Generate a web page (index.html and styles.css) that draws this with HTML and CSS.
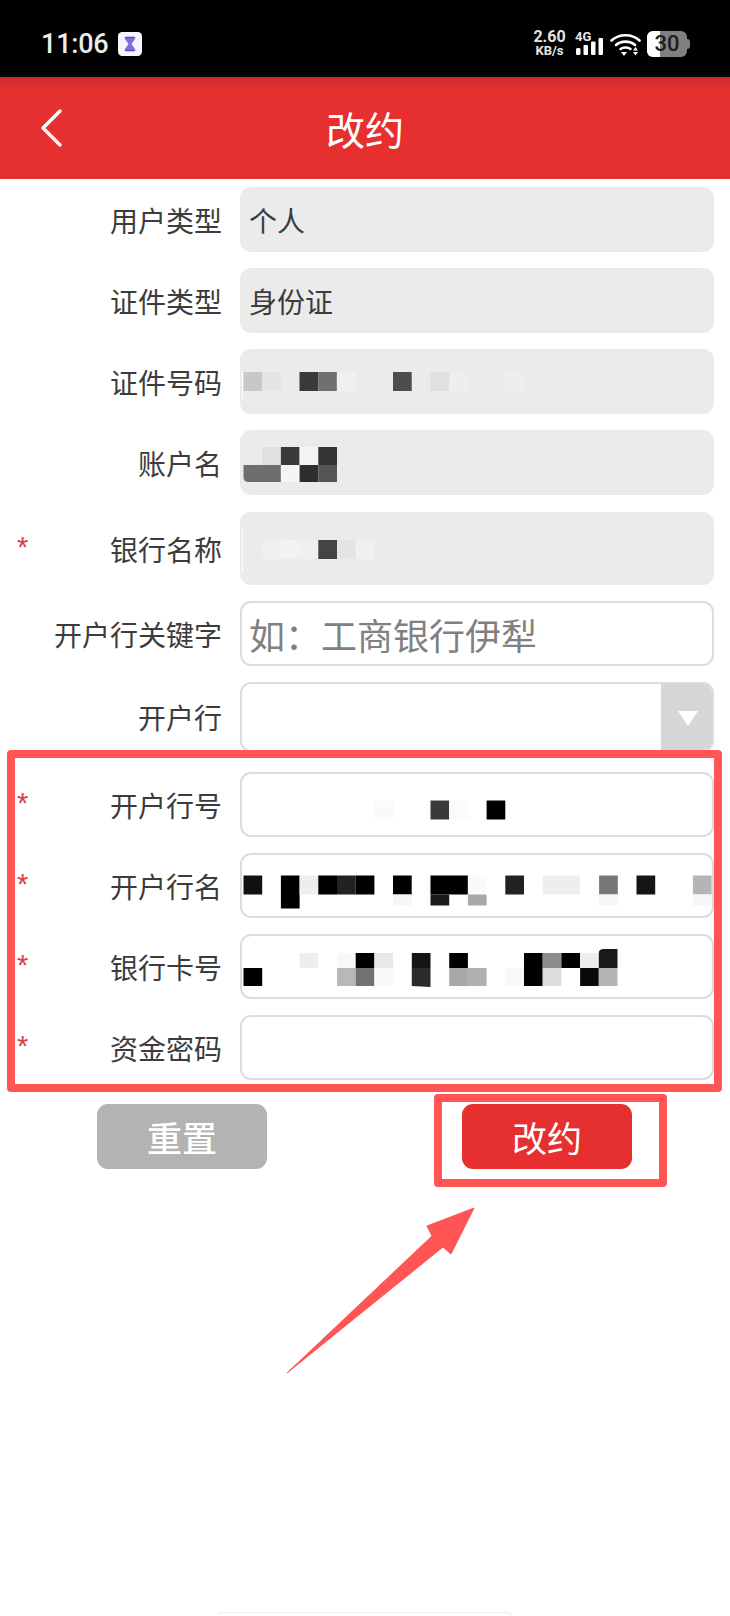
FILE: index.html
```html
<!DOCTYPE html>
<html lang="zh-CN">
<head>
<meta charset="utf-8">
<title>改约</title>
<link rel="stylesheet" href="styles.css">
</head>
<body>
<div class="page">
  <div class="statusbar">
    <span class="time">11:06</span>
    <svg class="app-icon" viewBox="0 0 23 23">
      <rect width="23" height="23" rx="4" fill="#f6f4fd"/>
      <path d="M6.5 4.5h10v2l-3.6 5 3.6 5v2h-10v-2l3.6-5-3.6-5z" fill="#7b6fe0"/>
      <path d="M7.5 5.2h8" stroke="#4f45b5" stroke-width="1"/>
      <path d="M7.5 17.8h8" stroke="#4f45b5" stroke-width="1"/>
    </svg>
    <span class="status-right">
      <span class="speed"><span class="speed-num">2.60</span><span class="speed-unit">KB/s</span></span>
      <span class="signal">
        <span class="net">4G</span>
        <svg class="bars" viewBox="0 0 27 17">
          <rect x="0" y="10" width="4.5" height="7" rx="1.5" fill="#fff"/>
          <rect x="7.5" y="7" width="4.5" height="10" rx="1" fill="#fff"/>
          <rect x="15" y="3.5" width="4.5" height="13.5" rx="1" fill="#fff"/>
          <rect x="22.5" y="0" width="4.5" height="17" rx="1" fill="#fff"/>
        </svg>
      </span>
      <svg class="wifi" viewBox="0 0 31 24">
        <path d="M1.5 8.5C9 1.5 22 1.5 29.5 8.5" fill="none" stroke="#fff" stroke-width="2.6" stroke-linecap="round"/>
        <path d="M6 13C11 8.5 20 8.5 25 13" fill="none" stroke="#fff" stroke-width="2.6" stroke-linecap="round"/>
        <path d="M10.5 17C13 15 18 15 20.5 17" fill="none" stroke="#fff" stroke-width="2.4" stroke-linecap="round"/>
        <path d="M11 20h6l-3 4z" fill="#fff"/>
        <path d="M23 18.5l2.5-3.5 2.5 3.5z" fill="#fff"/>
        <path d="M23 20l2.5 3.5 2.5-3.5z" fill="#fff"/>
      </svg>
      <span class="battery"><span class="battery-fill"></span><span class="battery-num">30</span></span>
    </span>
  </div>

  <header class="topbar">
    <svg class="back" viewBox="0 0 22 38">
      <path d="M20 2L3 19l17 17" fill="none" stroke="#fff" stroke-width="3.4" stroke-linecap="round" stroke-linejoin="round"/>
    </svg>
    <h1 class="title">改约</h1>
  </header>

  <main class="form">
    <div class="row">
      <span class="star"></span><label class="label">用户类型</label>
      <div class="field field-off">个人</div>
    </div>
    <div class="row">
      <span class="star"></span><label class="label">证件类型</label>
      <div class="field field-off">身份证</div>
    </div>
    <div class="row">
      <span class="star"></span><label class="label">证件号码</label>
      <div class="field field-off">
        <svg class="mosaic" viewBox="240 349 474 65">
          <rect x="243.5" y="372" width="18.7" height="19" fill="#c8c8c8"/>
          <rect x="262.2" y="372" width="18.7" height="19" fill="#e4e4e4"/>
          <rect x="299.5" y="372" width="18.7" height="19" fill="#3a3a3a"/>
          <rect x="318.2" y="372" width="18.7" height="19" fill="#707070"/>
          <rect x="336.9" y="372" width="18.7" height="19" fill="#f0f0f0"/>
          <rect x="393" y="372" width="18.7" height="19" fill="#4d4d4d"/>
          <rect x="430.5" y="372" width="18.7" height="19" fill="#e0e0e0"/>
          <rect x="449.2" y="372" width="18.7" height="19" fill="#eeeeee"/>
          <rect x="505.3" y="372" width="18.7" height="19" fill="#eeeeee"/>
          <rect x="240" y="372" width="3" height="28" fill="#ffffff"/>
        </svg>
      </div>
    </div>
    <div class="row">
      <span class="star"></span><label class="label">账户名</label>
      <div class="field field-off">
        <svg class="mosaic" viewBox="240 430 474 65">
          <rect x="262.2" y="447" width="18.7" height="18" fill="#e0e0e0"/>
          <rect x="280.9" y="447" width="18.7" height="18" fill="#3a3a3a"/>
          <rect x="299.6" y="447" width="18.7" height="18" fill="#f4f4f4"/>
          <rect x="318.3" y="447" width="18.7" height="18" fill="#333333"/>
          <path d="M243.5 465h37.4v17h-32.4q-5 0-5-5z" fill="#6e6e6e"/>
          <rect x="280.9" y="465" width="18.7" height="17" fill="#f5f5f5"/>
          <rect x="299.6" y="465" width="18.7" height="17" fill="#2e2e2e"/>
          <rect x="318.3" y="465" width="18.7" height="17" fill="#555555"/>
        </svg>
      </div>
    </div>
    <div class="row row-bank">
      <span class="star">*</span><label class="label">银行名称</label>
      <div class="field field-off field-bank">
        <svg class="mosaic" viewBox="240 512 474 73">
          <rect x="240" y="530" width="3" height="42" fill="#ffffff"/>
          <rect x="262.2" y="540" width="18.7" height="19" fill="#efefef"/>
          <rect x="280.9" y="540" width="18.7" height="19" fill="#f2f2f2"/>
          <rect x="299.6" y="540" width="18.7" height="19" fill="#f0f0f0"/>
          <rect x="318.3" y="540" width="18.7" height="19" fill="#444444"/>
          <rect x="337" y="540" width="18.7" height="19" fill="#e4e4e4"/>
          <rect x="355.7" y="540" width="18.7" height="19" fill="#f0f0f0"/>
        </svg>
      </div>
    </div>
    <div class="row">
      <span class="star"></span><label class="label">开户行关键字</label>
      <div class="field field-placeholder">如：工商银行伊犁</div>
    </div>
    <div class="row row-select">
      <span class="star"></span><label class="label">开户行</label>
      <div class="field field-select"><span class="select-btn"><span class="select-caret"></span></span></div>
    </div>

    <section class="group">
      <div class="row">
        <span class="star">*</span><label class="label">开户行号</label>
        <div class="field">
          <svg class="mosaic" viewBox="240 772 474 64">
            <rect x="374.4" y="800" width="18.7" height="19" fill="#fafafa"/>
            <rect x="430.5" y="800" width="18.7" height="19" fill="#3a3a3a"/>
            <rect x="449.2" y="800" width="18.7" height="19" fill="#fbfbfb"/>
            <rect x="486.6" y="800" width="18.7" height="19" fill="#000000"/>
            <rect x="255" y="832" width="245" height="5" fill="#ffffff"/>
          </svg>
        </div>
      </div>
      <div class="row">
        <span class="star">*</span><label class="label">开户行名</label>
        <div class="field">
          <svg class="mosaic" viewBox="240 853 474 64">
            <rect x="243.5" y="875" width="18.7" height="19" fill="#111111"/>
            <rect x="280.9" y="875" width="18.7" height="33" fill="#000000"/>
            <rect x="299.6" y="875" width="18.7" height="19" fill="#eeeeee"/>
            <rect x="318.3" y="875" width="18.7" height="19" fill="#000000"/>
            <rect x="337" y="875" width="18.7" height="19" fill="#222222"/>
            <rect x="355.7" y="875" width="18.7" height="19" fill="#000000"/>
            <rect x="393" y="875" width="18.7" height="19" fill="#000000"/>
            <rect x="430.5" y="875" width="37.4" height="19" fill="#000000"/>
            <rect x="467.9" y="875" width="18.7" height="19" fill="#fafafa"/>
            <rect x="505.3" y="875" width="18.7" height="19" fill="#222222"/>
            <rect x="542.7" y="875" width="37.4" height="19" fill="#eeeeee"/>
            <rect x="599.1" y="875" width="18.7" height="19" fill="#777777"/>
            <rect x="636.5" y="875" width="18.7" height="19" fill="#151515"/>
            <rect x="692.9" y="875" width="18.7" height="19" fill="#b5b5b5"/>
            <rect x="430.5" y="894" width="18.7" height="11" fill="#1a1a1a"/>
            <rect x="467.9" y="894" width="18.7" height="11" fill="#a8a8a8"/>
            <rect x="393" y="894" width="18.7" height="11" fill="#f6f6f6"/>
            <rect x="599.1" y="894" width="18.7" height="11" fill="#f6f6f6"/>
            <rect x="692.9" y="894" width="18.7" height="11" fill="#f6f6f6"/>
          </svg>
        </div>
      </div>
      <div class="row">
        <span class="star">*</span><label class="label">银行卡号</label>
        <div class="field">
          <svg class="mosaic" viewBox="240 934 474 65">
            <rect x="299.6" y="953" width="18.7" height="15" fill="#eeeeee"/>
            <rect x="337" y="953" width="18.7" height="15" fill="#f8f8f8"/>
            <rect x="355.7" y="953" width="18.7" height="15" fill="#000000"/>
            <rect x="374.4" y="953" width="18.7" height="15" fill="#e8e8e8"/>
            <rect x="411.8" y="953" width="18.7" height="15" fill="#151515"/>
            <rect x="449.2" y="953" width="18.7" height="15" fill="#000000"/>
            <rect x="524" y="953" width="18.7" height="15" fill="#000000"/>
            <rect x="542.7" y="953" width="18.7" height="15" fill="#8c8c8c"/>
            <rect x="561.4" y="953" width="18.7" height="15" fill="#000000"/>
            <rect x="580.1" y="953" width="18.7" height="15" fill="#eeeeee"/>
            <path d="M598.8 968v-15q0-4 5-4h13.7v19z" fill="#1a1a1a"/>
            <rect x="243.5" y="968" width="18.7" height="18" fill="#000000"/>
            <rect x="337" y="968" width="18.7" height="18" fill="#b8b8b8"/>
            <rect x="355.7" y="968" width="18.7" height="18" fill="#727272"/>
            <rect x="374.4" y="968" width="18.7" height="18" fill="#fafafa"/>
            <path d="M411.8 968h18.7v19l-18.7-1z" fill="#2a2a2a"/>
            <rect x="449.2" y="968" width="18.7" height="18" fill="#a8a8a8"/>
            <rect x="467.9" y="968" width="18.7" height="18" fill="#b0b0b0"/>
            <rect x="505.3" y="968" width="18.7" height="18" fill="#f8f8f8"/>
            <rect x="524" y="968" width="18.7" height="18" fill="#000000"/>
            <rect x="542.7" y="968" width="18.7" height="18" fill="#dddddd"/>
            <rect x="580.1" y="968" width="18.7" height="18" fill="#0a0a0a"/>
            <rect x="598.8" y="968" width="18.7" height="18" fill="#b5b5b5"/>
          </svg>
        </div>
      </div>
      <div class="row">
        <span class="star">*</span><label class="label">资金密码</label>
        <div class="field"></div>
      </div>
    </section>

    <div class="actions">
      <button class="btn btn-reset" type="button">重置</button>
      <button class="btn btn-submit" type="button">改约<span class="btn-mark"></span></button>
    </div>
  </main>

  <svg class="arrow" viewBox="0 0 200 190">
    <path d="M1 178L146 41 141 31 188 13 165 59 157 52z" fill="#ff5555" stroke="#ff5555" stroke-width="1" stroke-linejoin="round"/>
  </svg>

  <div class="sheet-edge"></div>
</div>
</body>
</html>
```
FILE: styles.css
```css
* { box-sizing: border-box; }
html, body { margin: 0; padding: 0; background: #fff; }
body { font-family: "Noto Sans CJK SC", "Noto Sans", sans-serif; color: #333; }

.page {
  position: relative;
  width: 730px;
  height: 1616px;
  overflow: hidden;
  display: flex;
  flex-direction: column;
  background: #fff;
}

/* status bar */
.statusbar {
  height: 77px;
  flex: none;
  background: #000;
  color: #fff;
  display: flex;
  align-items: center;
  padding: 10px 40px 0 41px;
  margin: 0;
}
.time {
  font-family: Roboto, sans-serif;
  font-size: 27px;
  font-weight: 500;
  line-height: 30px;
  color: #ececec;
  letter-spacing: -0.2px;
}
.app-icon { width: 24px; height: 24px; margin-left: 9px; }
.status-right { margin-left: auto; display: flex; align-items: center; }
.speed {
  display: flex;
  flex-direction: column;
  align-items: center;
  font-family: Roboto, sans-serif;
  font-weight: 700;
  color: #e6e6e6;
  width: 33px;
}
.speed-num { font-size: 16px; line-height: 14px; }
.speed-unit { font-size: 13px; line-height: 12px; margin-top: 1px; }
.signal { display: flex; flex-direction: column; margin-left: 9px; width: 28px; position: relative; height: 25px; }
.net {
  font-family: Roboto, sans-serif;
  font-weight: 700;
  font-size: 13px;
  line-height: 11px;
  color: #e6e6e6;
}
.bars { position: absolute; left: 1px; top: 7px; width: 27px; height: 17px; }
.wifi { width: 31px; height: 24px; margin-left: 7px; }
.battery {
  position: relative;
  width: 40px;
  height: 26px;
  margin-left: 6px;
  margin-right: 3px;
  border-radius: 6px;
  background: #808080;
  display: flex;
  align-items: center;
  justify-content: center;
}
.battery::after {
  content: "";
  position: absolute;
  left: 40px;
  top: 8px;
  width: 3px;
  height: 10px;
  border-radius: 0 3px 3px 0;
  background: #808080;
}
.battery-fill {
  position: absolute;
  left: 0;
  top: 0;
  bottom: 0;
  width: 13px;
  background: #fff;
  border-radius: 6px 0 0 6px;
}
.battery-num {
  position: relative;
  font-family: Roboto, sans-serif;
  font-size: 22px;
  font-weight: 500;
  color: #1c1c1c;
  line-height: 26px;
  margin-left: 0;
}

/* header */
.topbar {
  position: relative;
  height: 102px;
  flex: none;
  background: linear-gradient(#c92c2e 0, #e63030 12px);
  display: flex;
  align-items: center;
  justify-content: center;
}
.back { position: absolute; left: 40px; top: 32px; width: 22px; height: 38px; }
.title {
  margin: 0;
  font-size: 39px;
  font-weight: 400;
  color: #fff;
  line-height: 52px;
  position: relative;
  top: 0;
}

/* form */
.form { padding-top: 8px; }
.row {
  display: flex;
  align-items: center;
  margin-bottom: 16px;
  padding: 0 16px 0 17px;
}
.row-bank { margin-top: 17px; }
.row-select { margin-bottom: 0; }
.star {
  flex: none;
  width: 11px;
  font-family: "Liberation Sans", sans-serif;
  font-size: 29px;
  line-height: 25px;
  color: #d8404a;
  position: relative;
  top: -1px;
}
.label {
  flex: 1;
  text-align: right;
  margin-right: 17px;
  font-size: 28px;
  line-height: 40px;
  color: #3c3c3c;
  white-space: nowrap;
}
.field {
  position: relative;
  flex: none;
  width: 474px;
  height: 65px;
  border: 2px solid #dcdcdc;
  border-radius: 11px;
  background: #fff;
  padding: 0 7px;
  display: flex;
  align-items: center;
  font-size: 28px;
  color: #3c3c3c;
  overflow: hidden;
}
.row { column-gap: 1px; }
.field-off { background: #ebebeb; border-color: #ebebeb; }
.field-bank { height: 73px; }
.field-placeholder { font-size: 36px; color: #808080; padding-left: 7px; }
.field-select { height: 70px; justify-content: flex-end; padding: 0; }
.select-btn {
  width: 53px;
  align-self: stretch;
  background: #d6d6d6;
  display: flex;
  align-items: center;
  justify-content: center;
  margin: -2px -2px -2px 0;
}
.select-caret {
  width: 0;
  height: 0;
  border-left: 10px solid transparent;
  border-right: 10px solid transparent;
  border-top: 15px solid #fff;
  margin-top: 2px;
}
.mosaic {
  position: absolute;
  left: -2px;
  top: -2px;
  width: 474px;
  height: calc(100% + 4px);
}

/* highlighted group */
.group {
  margin: -2px 8px 0 7px;
  padding-top: 14px;
  padding-bottom: 4px;
  border: 8px solid #ff5555;
  border-radius: 4px;
  background: transparent;
  position: relative;
}
.group .row { padding: 0 0 0 2px; margin-bottom: 16px; }
.group .row:last-child { margin-bottom: 0; }

/* buttons */
.actions {
  display: flex;
  gap: 195px;
  margin-top: 12px;
  padding-left: 97px;
}
.btn {
  position: relative;
  width: 170px;
  height: 65px;
  border: 0;
  border-radius: 11px;
  color: #fff;
  font-family: "Noto Sans CJK SC", sans-serif;
  font-size: 35px;
  padding: 0;
}
.btn-reset { background: #b3b3b3; font-weight: 500; }
.btn-submit { background: #e63030; }
.btn-mark {
  position: absolute;
  left: -28px;
  top: -10px;
  width: 233px;
  height: 93px;
  border: 8px solid #ff5555;
  border-radius: 4px;
}

/* annotation arrow */
.arrow {
  position: absolute;
  left: 286px;
  top: 1195px;
  width: 200px;
  height: 190px;
}

/* sheet peeking at bottom */
.sheet-edge {
  margin: auto 218px 0 218px;
  height: 4px;
  border: 1px solid #eee;
  border-bottom: 0;
  border-radius: 5px 5px 0 0;
}
```
